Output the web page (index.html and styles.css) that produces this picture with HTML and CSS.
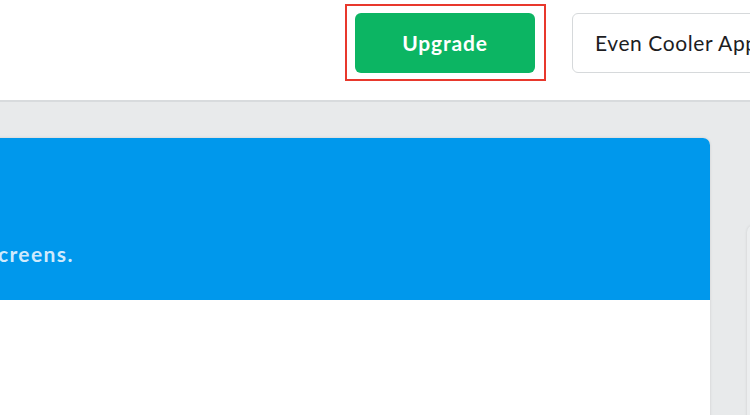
FILE: index.html
```html
<!DOCTYPE html>
<html>
<head>
<meta charset="utf-8">
<link rel="stylesheet" href="styles.css">
</head>
<body>
<header class="topbar">
  <div class="highlight">
    <button class="btn btn-upgrade">Upgrade</button>
  </div>
  <button class="btn btn-app">Even Cooler App</button>
</header>
<main class="content">
  <section class="card">
    <div class="card-hero">
      <p class="hero-text">Design for all your screens.</p>
    </div>
    <div class="card-body"></div>
  </section>
  <section class="card card-next"></section>
</main>
</body>
</html>
```
FILE: styles.css
```css
* { box-sizing: border-box; }
html, body { margin: 0; padding: 0; }
body {
  width: 750px;
  height: 415px;
  overflow: hidden;
  background: #e8eaeb;
  font-family: Lato, "Open Sans", sans-serif;
}
.topbar {
  height: 102px;
  background: #ffffff;
  border-bottom: 2px solid #d8dbdd;
  display: flex;
  align-items: flex-start;
  padding-left: 345px;
  padding-top: 4px;
  white-space: nowrap;
  overflow: hidden;
}
.highlight {
  border: 2px solid #e8382c;
  padding: 7px 9px 6px 8px;
  flex: none;
}
.btn {
  font-family: Lato, "Open Sans", sans-serif;
  font-size: 21px;
  height: 60px;
  border-radius: 6px;
  cursor: pointer;
  display: block;
  padding-bottom: 3px;
}
.btn-upgrade {
  width: 180px;
  background: #0cb563;
  color: #ffffff;
  border: none;
  font-weight: 700;
  letter-spacing: 0.8px;
}
.btn-app {
  margin-left: 26px;
  margin-top: 9px;
  width: 220px;
  flex: none;
  background: #ffffff;
  color: #1d1d1f;
  border: 1px solid #d6d9db;
  text-align: left;
  padding-left: 22px;
  font-weight: 400;
  letter-spacing: 0.6px;
}
.content {
  display: flex;
  align-items: flex-start;
  padding-top: 36px;
  gap: 37px;
  overflow: hidden;
  height: 313px;
}
.card {
  flex: none;
  width: 720px;
  margin-left: -10px;
  height: 300px;
  background: #ffffff;
  border-radius: 0 7px 0 0;
  box-shadow: 0 0 3px rgba(0, 0, 0, 0.12);
  overflow: hidden;
}
.card-hero {
  height: 162px;
  background: #0098ec;
  display: flex;
  align-items: flex-end;
  padding-bottom: 34px;
}
.hero-text {
  margin: 0 0 0 -205px;
  color: #cfeafc;
  font-size: 21px;
  font-weight: 700;
  letter-spacing: 1.4px;
  white-space: nowrap;
}
.card-body { height: 138px; }
.card-next {
  width: 300px;
  margin-left: 0;
  margin-top: 87px;
  height: 300px;
  background: #eceeef;
  border-radius: 7px 0 0 0;
}
```
